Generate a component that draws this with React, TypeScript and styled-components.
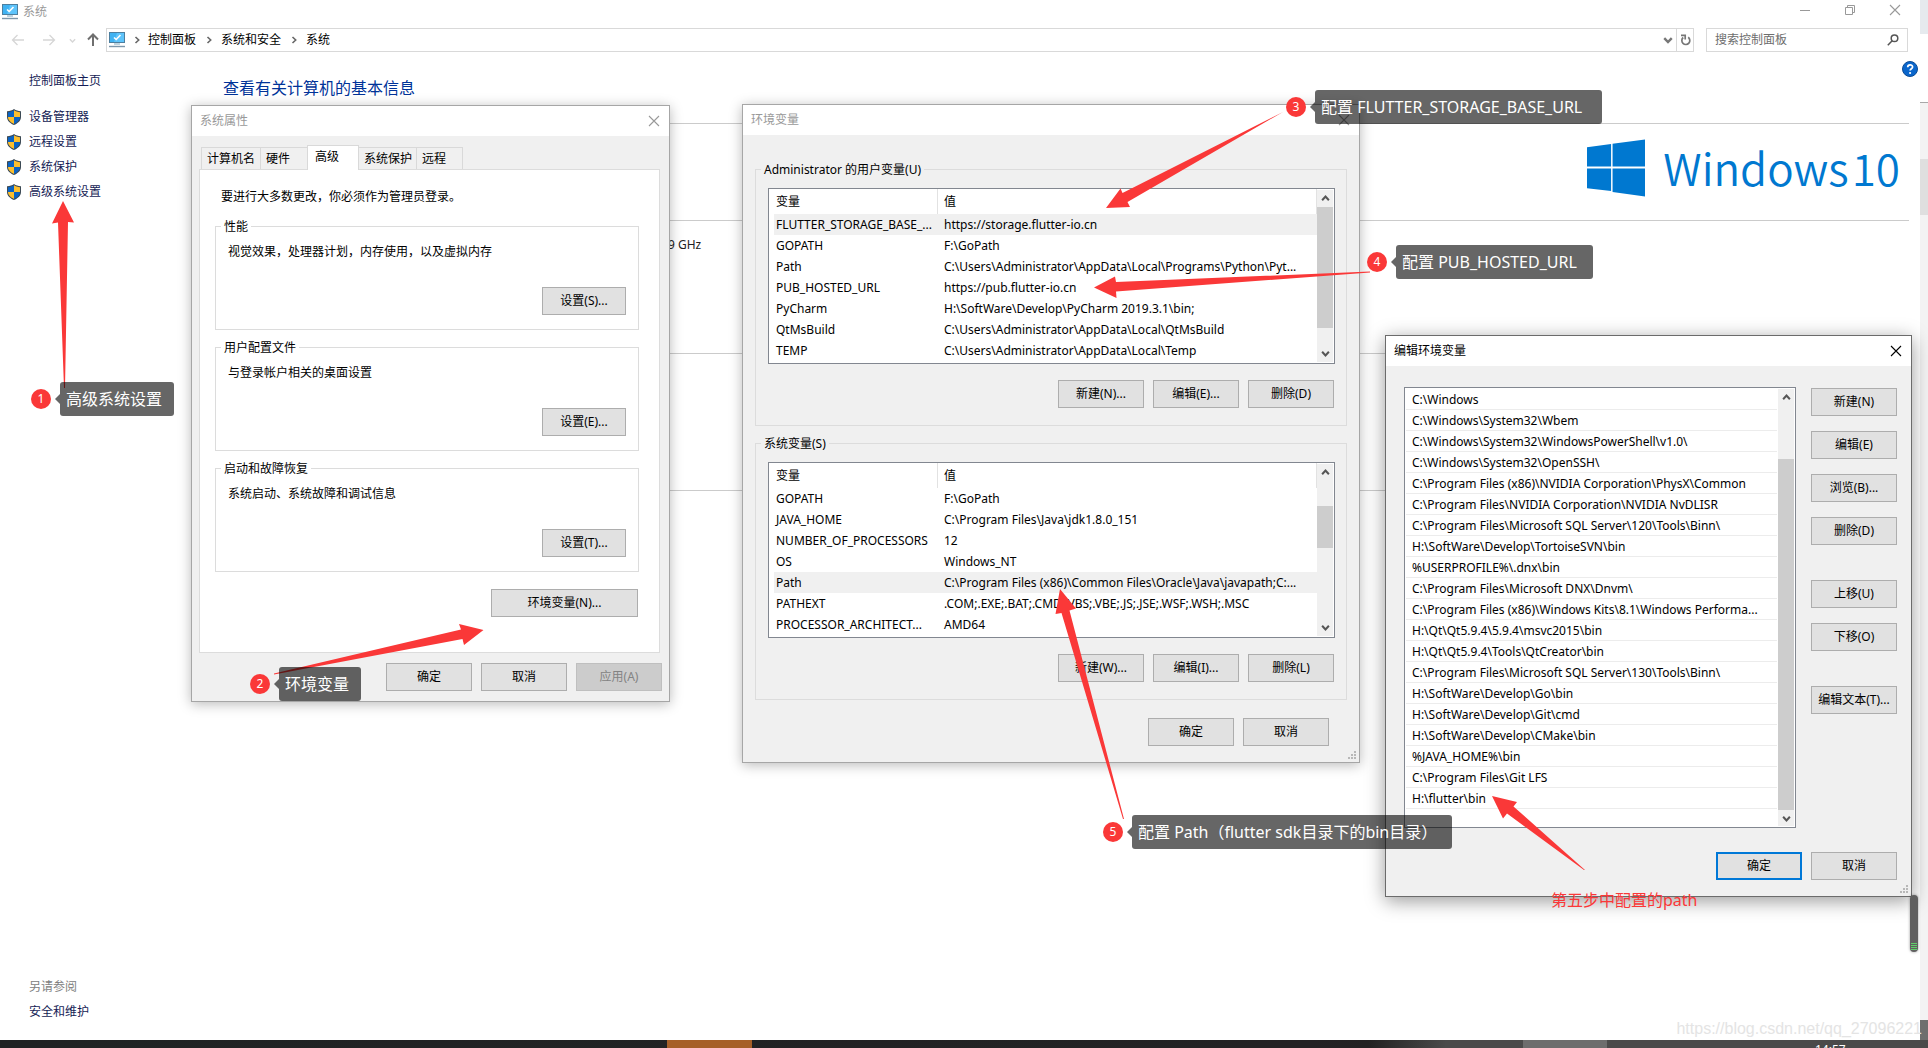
import React from "react";
import styled, { createGlobalStyle } from "styled-components";

const Global = createGlobalStyle`
  *, *::before, *::after { box-sizing: border-box; }
  html, body { margin: 0; padding: 0; }
  body, button, input {
    font-family: "Noto Sans", "Noto Sans CJK SC", sans-serif;
    font-size: 12px;
    line-height: 16px;
    color: #000;
  }
  body { background: #fff; overflow: hidden; }
  svg { display: block; flex: none; }
`;

/* ---------- desktop ---------- */

const Desktop = styled.div`
  position: relative;
  display: flex;
  flex-direction: column;
  height: 100vh;
  overflow: hidden;
`;
const Screen = styled.div`
  display: flex;
  flex: 1;
  min-height: 0;
`;
const MainWindow = styled.div`
  display: flex;
  flex-direction: column;
  flex: 1;
  min-width: 0;
`;
const EdgeStrip = styled.div`
  display: flex;
  flex-direction: column;
  width: 8px;
`;
const EdgePart = styled.div<{ $h?: number; $bg: string; $line?: boolean }>`
  height: ${(p) => (p.$h ? `${p.$h}px` : "auto")};
  flex: ${(p) => (p.$h ? "none" : 1)};
  background: ${(p) => p.$bg};
  border-top: ${(p) => (p.$line ? "1px solid #a8a8a8" : "none")};
`;
const TaskBar = styled.footer`
  display: flex;
  height: 8px;
  overflow: hidden;
  background: linear-gradient(90deg, #202324 0%, #232224 68%, #222 71%, #4a4a4a 75%, #4a4a4a 100%);
`;
const TaskSlot = styled.div<{ $w: number; $bg?: string }>`
  width: ${(p) => p.$w}px;
  flex: none;
  background: ${(p) => p.$bg || "transparent"};
`;
const Clock = styled.time`
  flex: 1;
  padding: 3px 0 0 208px;
  color: #fff;
  line-height: 14px;
`;

/* ---------- main window chrome ---------- */

const TopBar = styled.header`
  display: flex;
  align-items: center;
  gap: 5px;
  height: 24px;
  padding-left: 2px;
  color: #999;
`;
const TopTitle = styled.span`
  flex: 1;
`;
const Plain = styled.button`
  display: flex;
  align-items: center;
  justify-content: center;
  padding: 0;
  border: 0;
  background: none;
`;
const CaptionButton = styled(Plain)`
  width: 45px;
  height: 20px;
  margin-bottom: 4px;
`;
const CaptionGroup = styled.div`
  display: flex;
  padding-right: 3px;
`;
const NavBar = styled.nav`
  display: flex;
  align-items: center;
  gap: 12px;
  padding: 4px 12px 0 11px;
`;
const NavButtons = styled.div`
  display: grid;
  grid-template-columns: 31px 27px 17px 14px;
  align-items: center;
  justify-items: start;
  margin-right: -6px;
`;
const Address = styled.div`
  display: flex;
  flex: 1;
  align-items: center;
  height: 24px;
  padding-left: 2px;
  border: 1px solid #d9d9d9;
`;
const Crumb = styled.a`
  color: #000;
  text-decoration: none;
  white-space: nowrap;
`;
const CrumbSep = styled.span<{ $first?: boolean }>`
  display: flex;
  justify-content: center;
  width: ${(p) => (p.$first ? 23 : 25)}px;
`;
const AddressTools = styled.div`
  display: flex;
  align-self: stretch;
  margin-left: auto;
`;
const ToolButton = styled(Plain)<{ $line?: boolean }>`
  width: 17px;
  border-left: ${(p) => (p.$line ? "1px solid #d9d9d9" : "none")};
`;
const SearchBox = styled.label`
  display: flex;
  align-items: center;
  width: 202px;
  height: 24px;
  padding: 0 8px;
  border: 1px solid #d9d9d9;
`;
const SearchInput = styled.input`
  flex: 1;
  min-width: 0;
  padding: 0;
  border: 0;
  outline: 0;
  &::placeholder { color: #6d6d6d; opacity: 1; }
`;

/* ---------- main window body ---------- */

const Body = styled.div`
  display: flex;
  flex: 1;
  min-height: 0;
`;
const Sidebar = styled.aside`
  display: flex;
  flex-direction: column;
  width: 191px;
  padding: 16px 0 16px 7px;
`;
const SideLink = styled.a<{ $indent?: boolean }>`
  display: flex;
  align-items: center;
  gap: 8px;
  height: 25px;
  padding-left: ${(p) => (p.$indent ? 22 : 0)}px;
  color: #151c55;
  text-decoration: none;
`;
const SideList = styled.div`
  margin-top: 11px;
`;
const SideNote = styled.div`
  margin-top: auto;
  padding-left: 22px;
  height: 25px;
  line-height: 25px;
  color: #808080;
`;
const Content = styled.main`
  flex: 1;
  padding: 16px 11px 0 32px;
`;
const HeadRow = styled.div`
  display: flex;
  align-items: flex-start;
  height: 55px;
`;
const Heading = styled.h1`
  flex: 1;
  margin: 0;
  padding-top: 8px;
  font-size: 16px;
  line-height: 24px;
  font-weight: 400;
  color: #003399;
`;
const HelpButton = styled(Plain)`
  width: 18px;
  margin-right: -10px;
  height: 16px;
  margin-top: -7px;
`;
const Section = styled.section<{ $h: number }>`
  height: ${(p) => p.$h}px;
  border-top: 1px solid #cbcbcb;
`;
const Brand = styled.div`
  display: flex;
  align-items: flex-start;
  justify-content: flex-end;
  gap: 18px;
  padding: 15px 9px 0 0;
`;
const BrandText = styled.div`
  display: flex;
  gap: 3px;
  font-family: "Noto Sans CJK SC", sans-serif;
  font-weight: 350;
  font-size: 44px;
  line-height: 56px;
  color: #0078d0;
`;
const Processor = styled.div`
  padding: 16px 0 0 445px;
  color: #222;
`;

/* ---------- dialogs ---------- */

const Dialog = styled.section<{ $x: number; $y: number; $w: number; $active?: boolean }>`
  position: absolute;
  left: ${(p) => p.$x}px;
  top: ${(p) => p.$y}px;
  width: ${(p) => p.$w}px;
  background: #f0f0f0;
  border: 1px solid ${(p) => (p.$active ? "#6b6b6b" : "#a6a6a6")};
  box-shadow: ${(p) => (p.$active ? "0 4px 18px rgba(0,0,0,.4)" : "0 2px 12px rgba(0,0,0,.28)")};
`;
const DialogTitle = styled.header<{ $active?: boolean }>`
  display: flex;
  align-items: center;
  justify-content: space-between;
  height: 30px;
  padding: 0 9px 0 8px;
  background: #fff;
  color: ${(p) => (p.$active ? "#000" : "#999")};
`;
const Btn = styled.button<{ $w?: number; $primary?: boolean }>`
  width: ${(p) => p.$w || 86}px;
  height: 28px;
  flex: none;
  padding: 0;
  border: ${(p) => (p.$primary ? "2px solid #0078d7" : "1px solid #adadad")};
  background: #e1e1e1;
  white-space: nowrap;
  &:disabled { background: #ccc; border-color: #bfbfbf; color: #838383; }
`;
const ButtonRow = styled.div<{ $pad: string }>`
  display: flex;
  justify-content: flex-end;
  gap: 9px;
  padding: ${(p) => p.$pad};
`;
const Group = styled.fieldset<{ $pad: string; $margin: string }>`
  display: block;
  min-width: 0;
  margin: ${(p) => p.$margin};
  padding: ${(p) => p.$pad};
  border: 1px solid #dcdcdc;
`;
const Legend = styled.legend<{ $pull?: boolean }>`
  margin-left: ${(p) => (p.$pull ? -7 : 0)}px;
  padding: 0 3px;
  height: 16px;
  line-height: 18px;
`;

/* system properties */

const Tabs = styled.div`
  display: flex;
  align-items: flex-end;
  height: 33px;
  padding-left: 9px;
`;
const Tab = styled.button<{ $w: number; $on?: boolean }>`
  position: relative;
  z-index: ${(p) => (p.$on ? 1 : 0)};
  width: ${(p) => p.$w}px;
  height: ${(p) => (p.$on ? 25 : 22)}px;
  margin: 0 -1px ${(p) => (p.$on ? -1 : 0)}px 0;
  padding: 0 0 ${(p) => (p.$on ? 3 : 0)}px ${(p) => (p.$on ? 7 : 5)}px;
  border: 1px solid #d9d9d9;
  border-bottom: 0;
  background: ${(p) => (p.$on ? "#fff" : "#f0f0f0")};
  text-align: left;
  white-space: nowrap;
`;
const TabPanel = styled.div`
  display: flex;
  flex-direction: column;
  margin: 0 9px 0 7px;
  padding: 19px 20px 35px 15px;
  background: #fff;
  border: 1px solid #dcdcdc;
`;
const Note = styled.p`
  margin: 0;
  padding: 0 0 4px 6px;
`;
const GroupText = styled.p`
  margin: 0;
  padding: 10px 0 27px 7px;
`;
const EnvRow = styled.div`
  display: flex;
  justify-content: flex-end;
  padding: 17px 1px 0 0;
`;

/* list boxes */

const ListBox = styled.div<{ $h: number }>`
  display: flex;
  flex: 1;
  min-width: 0;
  height: ${(p) => p.$h}px;
  padding: 0 1px 0 0;
  background: #fff;
  border: 1px solid #828790;
  overflow: hidden;
`;
const TableWrap = styled.div`
  flex: 1;
  min-width: 0;
  padding-left: 5px;
  overflow: hidden;
`;
const VarTable = styled.table`
  width: 100%;
  table-layout: fixed;
  border-collapse: separate;
  border-spacing: 0;
`;
const Th = styled.th<{ $w?: number }>`
  width: ${(p) => (p.$w ? `${p.$w}px` : "auto")};
  height: 25px;
  padding: 1px 0 0 ${(p) => (p.$w ? 2 : 6)}px;
  border-right: 1px solid #e2e2e2;
  font-weight: 400;
  text-align: left;
`;
const Td = styled.td<{ $first?: boolean }>`
  height: 21px;
  padding: 0 0 0 ${(p) => (p.$first ? 2 : 6)}px;
  white-space: nowrap;
  overflow: hidden;
`;
const Tr = styled.tr<{ $on?: boolean }>`
  background: ${(p) => (p.$on ? "#f0f0f0" : "#fff")};
`;
const Bar = styled.div`
  display: flex;
  flex-direction: column;
  width: 16px;
  flex: none;
  margin: 1px 0;
  background: #f0f0f0;
`;
const BarButton = styled(Plain)`
  height: 17px;
  width: 16px;
  flex: none;
`;
const Track = styled.div<{ $top: number }>`
  flex: 1;
  padding-top: ${(p) => p.$top}px;
`;
const Thumb = styled.div<{ $h: number }>`
  height: ${(p) => p.$h}px;
  background: #cdcdcd;
`;
const PathList = styled.ul`
  flex: 1;
  min-width: 0;
  margin: 0;
  padding: 1px 1px 0 1px;
  list-style: none;
  overflow: hidden;
`;
const PathItem = styled.li`
  height: 21px;
  padding: 3px 0 0 6px;
  border-bottom: 1px solid #ececec;
  white-space: nowrap;
`;
const EditBody = styled.div`
  display: flex;
  gap: 15px;
  padding: 21px 14px 0 18px;
`;
const EditButtons = styled.div`
  display: flex;
  flex-direction: column;
  gap: 35px;
  padding-top: 1px;
`;
const EditGroup = styled.div`
  display: flex;
  flex-direction: column;
  gap: 15px;
`;
const GripSpot = styled.div`
  position: absolute;
  right: 3px;
  bottom: 3px;
`;

/* ---------- annotations ---------- */

const Arrows = styled.svg`
  position: absolute;
  left: 0;
  top: 0;
  pointer-events: none;
`;
const Callout = styled.div<{ $x: number; $y: number }>`
  position: absolute;
  left: ${(p) => p.$x}px;
  top: ${(p) => p.$y}px;
  display: flex;
  align-items: center;
`;
const Badge = styled.span`
  width: 20px;
  height: 20px;
  border-radius: 50%;
  background: #fa3838;
  color: #fff;
  line-height: 20px;
  text-align: center;
`;
const Beak = styled.span`
  margin-left: 4px;
  border: 5px solid transparent;
  border-left: 0;
  border-right-color: rgba(0, 0, 0, 0.6);
`;
const Bubble = styled.span<{ $w: number }>`
  width: ${(p) => p.$w}px;
  height: 34px;
  padding-left: 6px;
  border-radius: 3px;
  background: rgba(0, 0, 0, 0.6);
  color: #fff;
  font-size: 16px;
  line-height: 34px;
  white-space: nowrap;
`;
const RedNote = styled.div`
  position: absolute;
  left: 1551px;
  top: 888px;
  font-size: 16px;
  line-height: 24px;
  color: #fa3838;
`;
const Watermark = styled.div`
  position: absolute;
  right: 6px;
  bottom: 8px;
  font-family: "Liberation Sans", sans-serif;
  font-size: 16px;
  line-height: 22px;
  color: #e4e4e4;
`;
const Meter = styled.div`
  position: absolute;
  right: 10px;
  top: 895px;
  display: flex;
  flex-direction: column;
  justify-content: flex-end;
  gap: 1px;
  width: 8px;
  height: 57px;
  padding: 0 1px 2px;
  border-radius: 4px;
  background: #606060;
  box-shadow: 0 0 3px rgba(0, 0, 0, 0.4);
`;
const MeterBar = styled.i`
  height: 1px;
  background: #5fd06a;
`;

/* ---------- drawings ---------- */

const MonitorIcon = () => (
  <svg width="16" height="16" viewBox="0 0 16 16" aria-hidden="true">
    <rect x="0.5" y="0.5" width="15" height="10" fill="#3fb2f2" stroke="#4d7f9f" />
    <path d="M8 1h7v9H5z" fill="#5ec4fb" />
    <path d="M5 5.500l2.200 2L11.500 3" fill="none" stroke="#fff" strokeWidth="1.600" />
    <path d="M5 12h6" stroke="#7ba7c0" />
    <path d="M0 14.500h16" stroke="#7d97ab" strokeWidth="1.400" />
  </svg>
);
const Shield = () => (
  <svg width="14" height="16" viewBox="0 0 14 16" aria-hidden="true">
    <path d="M7 0C5 1.500 3 2 0 2.300V8c0 4 3.500 6.500 7 8 3.500-1.500 7-4 7-8V2.300C11 2 9 1.500 7 0z" fill="#3c4a55" />
    <path d="M7 1.300V8H1V3.200C3.500 2.900 5.300 2.400 7 1.300z" fill="#0a63c4" />
    <path d="M7 1.300V8h6V3.200C10.500 2.900 8.700 2.400 7 1.300z" fill="#fdbf2d" />
    <path d="M1 8h6v6.900C3.800 13.400 1 11.300 1 8z" fill="#fdbf2d" />
    <path d="M13 8H7v6.900C10.200 13.400 13 11.300 13 8z" fill="#0a63c4" />
  </svg>
);
const Arrow = ({ dir, color }: { dir: "left" | "right" | "up"; color: string }) => {
  const turn = { left: 0, up: 90, right: 180 }[dir];
  return (
    <svg width="14" height="14" viewBox="0 0 14 14" aria-hidden="true">
      <path d="M13 7H2M6.500 2L1.500 7l5 5" transform={`rotate(${turn} 7 7)`} fill="none" stroke={color} strokeWidth={dir === "up" ? 2 : 1.3} />
    </svg>
  );
};
const Chevron = ({ turn = 0, color = "#555", size = 8, weight = 1.6 }: { turn?: number; color?: string; size?: number; weight?: number }) => (
  <svg width={size} height={size} viewBox="0 0 8 8" aria-hidden="true">
    <path d="M1 2.500l3 3.200 3-3.200" transform={`rotate(${turn} 4 4)`} fill="none" stroke={color} strokeWidth={weight} />
  </svg>
);
const Cross = ({ color = "#999" }: { color?: string }) => (
  <svg width="12" height="12" viewBox="0 0 12 12" aria-hidden="true">
    <path d="M1 1l10 10M11 1L1 11" stroke={color} strokeWidth="1.100" />
  </svg>
);
const Grip = () => (
  <GripSpot>
    <svg width="9" height="9" viewBox="0 0 9 9" fill="#b8b8b8" aria-hidden="true">
      <path d="M7 1h2v2H7zM7 4h2v2H7zM4 4h2v2H4zM7 7h2v2H7zM4 7h2v2H4zM1 7h2v2H1z" />
    </svg>
  </GripSpot>
);

/* ---------- data ---------- */

type Row = [string, string];
const userVars: Row[] = [
  ["FLUTTER_STORAGE_BASE_...", "https://storage.flutter-io.cn"],
  ["GOPATH", "F:\\GoPath"],
  ["Path", "C:\\Users\\Administrator\\AppData\\Local\\Programs\\Python\\Pyt..."],
  ["PUB_HOSTED_URL", "https://pub.flutter-io.cn"],
  ["PyCharm", "H:\\SoftWare\\Develop\\PyCharm 2019.3.1\\bin;"],
  ["QtMsBuild", "C:\\Users\\Administrator\\AppData\\Local\\QtMsBuild"],
  ["TEMP", "C:\\Users\\Administrator\\AppData\\Local\\Temp"],
];
const systemVars: Row[] = [
  ["GOPATH", "F:\\GoPath"],
  ["JAVA_HOME", "C:\\Program Files\\Java\\jdk1.8.0_151"],
  ["NUMBER_OF_PROCESSORS", "12"],
  ["OS", "Windows_NT"],
  ["Path", "C:\\Program Files (x86)\\Common Files\\Oracle\\Java\\javapath;C:..."],
  ["PATHEXT", ".COM;.EXE;.BAT;.CMD;.VBS;.VBE;.JS;.JSE;.WSF;.WSH;.MSC"],
  ["PROCESSOR_ARCHITECT...", "AMD64"],
];
const paths = [
  "C:\\Windows",
  "C:\\Windows\\System32\\Wbem",
  "C:\\Windows\\System32\\WindowsPowerShell\\v1.0\\",
  "C:\\Windows\\System32\\OpenSSH\\",
  "C:\\Program Files (x86)\\NVIDIA Corporation\\PhysX\\Common",
  "C:\\Program Files\\NVIDIA Corporation\\NVIDIA NvDLISR",
  "C:\\Program Files\\Microsoft SQL Server\\120\\Tools\\Binn\\",
  "H:\\SoftWare\\Develop\\TortoiseSVN\\bin",
  "%USERPROFILE%\\.dnx\\bin",
  "C:\\Program Files\\Microsoft DNX\\Dnvm\\",
  "C:\\Program Files (x86)\\Windows Kits\\8.1\\Windows Performa...",
  "H:\\Qt\\Qt5.9.4\\5.9.4\\msvc2015\\bin",
  "H:\\Qt\\Qt5.9.4\\Tools\\QtCreator\\bin",
  "C:\\Program Files\\Microsoft SQL Server\\130\\Tools\\Binn\\",
  "H:\\SoftWare\\Develop\\Go\\bin",
  "H:\\SoftWare\\Develop\\Git\\cmd",
  "H:\\SoftWare\\Develop\\CMake\\bin",
  "%JAVA_HOME%\\bin",
  "C:\\Program Files\\Git LFS",
  "H:\\flutter\\bin",
];
const sideLinks = ["设备管理器", "远程设置", "系统保护", "高级系统设置"];
const propertyGroups = [
  { name: "性能", text: "视觉效果，处理器计划，内存使用，以及虚拟内存", button: "设置(S)..." },
  { name: "用户配置文件", text: "与登录帐户相关的桌面设置", button: "设置(E)..." },
  { name: "启动和故障恢复", text: "系统启动、系统故障和调试信息", button: "设置(T)..." },
];
const callouts = [
  { n: 1, x: 31, y: 382, w: 114, text: "高级系统设置" },
  { n: 2, x: 250, y: 667, w: 82, text: "环境变量" },
  { n: 3, x: 1286, y: 90, w: 287, text: "配置 FLUTTER_STORAGE_BASE_URL" },
  { n: 4, x: 1367, y: 245, w: 197, text: "配置 PUB_HOSTED_URL" },
  { n: 5, x: 1103, y: 815, w: 320, text: "配置 Path（flutter sdk目录下的bin目录）" },
];

/* ---------- parts ---------- */

const ScrollBar = ({ top, size }: { top: number; size: number }) => (
  <Bar>
    <BarButton type="button" aria-label="向上滚动"><Chevron turn={180} size={9} weight={1.8} /></BarButton>
    <Track $top={top}><Thumb $h={size} /></Track>
    <BarButton type="button" aria-label="向下滚动"><Chevron size={9} weight={1.8} /></BarButton>
  </Bar>
);

const Variables = ({ title, rows, selected, top, size, buttons, margin }: {
  title: string; rows: Row[]; selected: number; top: number; size: number; buttons: string[]; margin: string;
}) => (
  <Group $margin={margin} $pad="11px 11px 17px 12px">
    <Legend $pull>{title}</Legend>
    <ListBox $h={176}>
      <TableWrap>
        <VarTable>
          <thead>
            <tr><Th $w={164}>变量</Th><Th>值</Th></tr>
          </thead>
          <tbody>
            {rows.map(([name, value], i) => (
              <Tr key={name} $on={i === selected}>
                <Td $first>{name}</Td>
                <Td>{value}</Td>
              </Tr>
            ))}
          </tbody>
        </VarTable>
      </TableWrap>
      <ScrollBar top={top} size={size} />
    </ListBox>
    <ButtonRow $pad="16px 1px 0 0">
      {buttons.map((b) => <Btn type="button" key={b}>{b}</Btn>)}
    </ButtonRow>
  </Group>
);

const SystemProperties = () => (
  <Dialog $x={191} $y={105} $w={479}>
    <DialogTitle>
      <span>系统属性</span>
      <Plain type="button" aria-label="关闭"><Cross /></Plain>
    </DialogTitle>
    <Tabs role="tablist">
      <Tab type="button" role="tab" $w={60}>计算机名</Tab>
      <Tab type="button" role="tab" $w={48}>硬件</Tab>
      <Tab type="button" role="tab" $w={52} $on aria-selected>高级</Tab>
      <Tab type="button" role="tab" $w={59}>系统保护</Tab>
      <Tab type="button" role="tab" $w={47}>远程</Tab>
    </Tabs>
    <TabPanel>
      <Note>要进行大多数更改，你必须作为管理员登录。</Note>
      {propertyGroups.map((g) => (
        <Group key={g.name} $margin="9px 0 0" $pad="0 12px 14px 5px">
          <Legend>{g.name}</Legend>
          <GroupText>{g.text}</GroupText>
          <ButtonRow $pad="0"><Btn type="button" $w={84}>{g.button}</Btn></ButtonRow>
        </Group>
      ))}
      <EnvRow><Btn type="button" $w={147}>环境变量(N)...</Btn></EnvRow>
    </TabPanel>
    <ButtonRow $pad="10px 7px 10px">
      <Btn type="button">确定</Btn>
      <Btn type="button">取消</Btn>
      <Btn type="button" disabled>应用(A)</Btn>
    </ButtonRow>
  </Dialog>
);

const EnvironmentVariables = () => (
  <Dialog $x={742} $y={104} $w={618}>
    <DialogTitle>
      <span>环境变量</span>
      <Plain type="button" aria-label="关闭"><Cross /></Plain>
    </DialogTitle>
    <Variables title="Administrator 的用户变量(U)" rows={userVars} selected={0} top={0} size={121}
      buttons={["新建(N)...", "编辑(E)...", "删除(D)"]} margin="26px 12px 0" />
    <Variables title="系统变量(S)" rows={systemVars} selected={4} top={25} size={42}
      buttons={["新建(W)...", "编辑(I)...", "删除(L)"]} margin="9px 12px 0" />
    <ButtonRow $pad="18px 30px 16px">
      <Btn type="button">确定</Btn>
      <Btn type="button">取消</Btn>
    </ButtonRow>
    <Grip />
  </Dialog>
);

const EditVariable = () => (
  <Dialog $x={1385} $y={335} $w={527} $active>
    <DialogTitle $active>
      <span>编辑环境变量</span>
      <Plain type="button" aria-label="关闭"><Cross color="#000" /></Plain>
    </DialogTitle>
    <EditBody>
      <ListBox $h={441}>
        <PathList>
          {paths.map((p) => <PathItem key={p}>{p}</PathItem>)}
        </PathList>
        <ScrollBar top={53} size={351} />
      </ListBox>
      <EditButtons>
        <EditGroup>
          {["新建(N)", "编辑(E)", "浏览(B)...", "删除(D)"].map((b) => <Btn type="button" key={b}>{b}</Btn>)}
        </EditGroup>
        <EditGroup>
          {["上移(U)", "下移(O)"].map((b) => <Btn type="button" key={b}>{b}</Btn>)}
        </EditGroup>
        <Btn type="button">编辑文本(T)...</Btn>
      </EditButtons>
    </EditBody>
    <ButtonRow $pad="24px 14px 16px">
      <Btn type="button" $primary>确定</Btn>
      <Btn type="button">取消</Btn>
    </ButtonRow>
    <Grip />
  </Dialog>
);

export default function App() {
  return (
    <Desktop>
      <Global />
      <Screen>
        <MainWindow>
          <TopBar>
            <MonitorIcon />
            <TopTitle>系统</TopTitle>
            <CaptionGroup>
              <CaptionButton type="button" aria-label="最小化">
                <svg width="10" height="10" viewBox="0 0 10 10"><path d="M0 5.500h10" stroke="#999" /></svg>
              </CaptionButton>
              <CaptionButton type="button" aria-label="还原">
                <svg width="10" height="10" viewBox="0 0 10 10" fill="none" stroke="#999"><path d="M.5 2.500h7v7h-7zM2.500 2.500v-2h7v7h-2" /></svg>
              </CaptionButton>
              <CaptionButton type="button" aria-label="关闭"><Cross /></CaptionButton>
            </CaptionGroup>
          </TopBar>
          <NavBar>
            <NavButtons>
              <Plain type="button" aria-label="后退"><Arrow dir="left" color="#d6d6d6" /></Plain>
              <Plain type="button" aria-label="前进"><Arrow dir="right" color="#d6d6d6" /></Plain>
              <Plain type="button" aria-label="历史"><Chevron color="#d6d6d6" size={7} /></Plain>
              <Plain type="button" aria-label="向上"><Arrow dir="up" color="#6f6f6f" /></Plain>
            </NavButtons>
            <Address>
              <MonitorIcon />
              <CrumbSep $first><Chevron turn={-90} color="#666" /></CrumbSep>
              <Crumb href="#panel">控制面板</Crumb>
              <CrumbSep><Chevron turn={-90} color="#666" /></CrumbSep>
              <Crumb href="#security">系统和安全</Crumb>
              <CrumbSep><Chevron turn={-90} color="#666" /></CrumbSep>
              <Crumb href="#system">系统</Crumb>
              <AddressTools>
                <ToolButton type="button" aria-label="展开"><Chevron color="#777" size={10} weight={1.9} /></ToolButton>
                <ToolButton type="button" aria-label="刷新" $line>
                  <svg width="11" height="12" viewBox="0 0 11 12" fill="none" stroke="#777" strokeWidth="1.700">
                    <path d="M8.200 3.300a4 4 0 1 1-5 .2" /><path d="M1 1.300h4.200v4.200" />
                  </svg>
                </ToolButton>
              </AddressTools>
            </Address>
            <SearchBox>
              <SearchInput type="text" aria-label="搜索控制面板" placeholder="搜索控制面板" />
              <svg width="12" height="12" viewBox="0 0 12 12" fill="none" stroke="#555" strokeWidth="1.500">
                <circle cx="7.500" cy="4.300" r="3.300" /><path d="M5.200 6.800L.8 11.300" />
              </svg>
            </SearchBox>
          </NavBar>
          <Body>
            <Sidebar>
              <SideLink href="#home" $indent>控制面板主页</SideLink>
              <SideList>
                {sideLinks.map((t) => <SideLink href={`#${t}`} key={t}><Shield />{t}</SideLink>)}
              </SideList>
              <SideNote>另请参阅</SideNote>
              <SideLink href="#maintenance" $indent>安全和维护</SideLink>
            </Sidebar>
            <Content>
              <HeadRow>
                <Heading>查看有关计算机的基本信息</Heading>
                <HelpButton type="button" aria-label="帮助">
                  <svg width="16" height="16" viewBox="0 0 16 16">
                    <circle cx="8" cy="8" r="7.500" fill="#0a66cc" stroke="#0b4a94" />
                    <path d="M5.700 6.200c0-3.200 4.900-3 4.900-.3C10.600 7.700 8.100 7.700 8.100 9.600" fill="none" stroke="#fff" strokeWidth="1.700" />
                    <circle cx="8.100" cy="12" r="1.100" fill="#fff" />
                  </svg>
                </HelpButton>
              </HeadRow>
              <Section $h={97}>
                <Brand>
                  <svg width="58" height="58" viewBox="0 0 59 58" fill="#0078d0" aria-hidden="true">
                    <path d="M0 8l24.500-3.500v23H0zM26 4.300L59 0v27.500H26zM0 29.500h24.500v23L0 49.500zM26 29.500h33V58l-33-4.700z" />
                  </svg>
                  <BrandText><span>Windows</span><span>10</span></BrandText>
                </Brand>
              </Section>
              <Section $h={133}><Processor>9 GHz</Processor></Section>
              <Section $h={137} />
              <Section $h={100} />
            </Content>
          </Body>
        </MainWindow>
        <EdgeStrip>
          <EdgePart $h={34} $bg="#e6eaee" />
          <EdgePart $h={68} $bg="#fff" />
          <EdgePart $h={57} $bg="#f3f3f3" $line />
          <EdgePart $h={56} $bg="#dfdfdf" />
          <EdgePart $bg="#f3f3f3" />
          <EdgePart $h={20} $bg="#6e6e6e" />
        </EdgeStrip>
      </Screen>
      <TaskBar>
        <TaskSlot $w={667} />
        <TaskSlot $w={85} $bg="#a65f28" />
        <TaskSlot $w={771} />
        <TaskSlot $w={84} $bg="#6d6d6d" />
        <Clock>14:57</Clock>
      </TaskBar>

      <SystemProperties />
      <EnvironmentVariables />
      <EditVariable />
      <Meter><MeterBar /><MeterBar /><MeterBar /><MeterBar /></Meter>

      <Arrows width="1928" height="1048" viewBox="0 0 1928 1048" fill="#fa3838" aria-hidden="true">
        <path d="M63 201L74 222.500 68 222 65 388 64 388 58 222.500 52 223.500z" />
        <path d="M483.500 630L464 645 462.500 639 274 674.500 274 673.500 461 629.500 459 624z" />
        <path d="M1106 208L1120.500 188.500 1122.500 193 1283 112 1127.500 202 1130 207z" />
        <path d="M1094 287.500L1115 276.500 1116 282 1370 271.500 1370 272.500 1116 291.500 1116.500 298z" />
        <path d="M1060 589L1076 608.500 1069.500 610.500 1124 819 1123 819 1061.500 613 1055.500 614z" />
        <path d="M1492 796L1517 802 1513.500 806.500 1585 870 1584 870 1507 813.500 1503 818.500z" />
      </Arrows>
      {callouts.map((c) => (
        <Callout key={c.n} $x={c.x} $y={c.y}>
          <Badge>{c.n}</Badge>
          <Beak />
          <Bubble $w={c.w}>{c.text}</Bubble>
        </Callout>
      ))}
      <RedNote>第五步中配置的path</RedNote>
      <Watermark>https://blog.csdn.net/qq_27096221</Watermark>
    </Desktop>
  );
}
